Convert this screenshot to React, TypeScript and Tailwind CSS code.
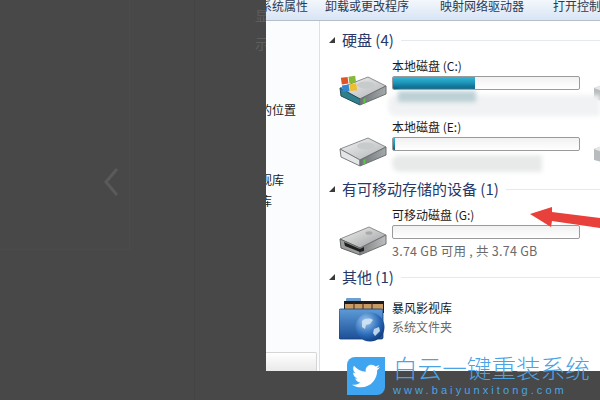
import type { FC, ReactNode } from 'react'
import { FaTwitter } from 'react-icons/fa'

const font = { fontFamily: '"Noto Sans CJK SC", "Liberation Sans", sans-serif' }

const Heading: FC<{ title: string }> = ({ title }) => (
  <div className="flex items-center h-5">
    <svg width="6" height="6" viewBox="0 0 6 6" className="mr-[7px] shrink-0">
      <path d="M6 0V6H0Z" fill="#3a3a3a" />
    </svg>
    <span className="text-[15px] text-[#27396b] leading-5 whitespace-nowrap">{title}</span>
    <div className="flex-1 h-px bg-[#e6eaf0] ml-[7px]" />
  </div>
)

// 硬盘图标,windows 标志可选
const DriveIcon: FC<{ windows?: boolean }> = ({ windows }) => (
  <svg width="48" height="30" viewBox="0 0 48 30" className="shrink-0">
    <defs>
      <linearGradient id="top" x1="0" y1="0" x2="1" y2="1">
        <stop offset="0" stopColor="#f2f3f3" />
        <stop offset="1" stopColor="#b0b3b5" />
      </linearGradient>
      <linearGradient id="right" x1="0" y1="0" x2="1" y2="0">
        <stop offset="0" stopColor="#6d7376" />
        <stop offset="1" stopColor="#a5a9ab" />
      </linearGradient>
    </defs>
    <path d="M1 12 29 1 47 10 21 23Z" fill="url(#top)" stroke="#8a8e90" strokeWidth="1" strokeLinejoin="round" />
    <path d="M1 12 21 23V29L2 20Z" fill={windows ? '#2f7f8c' : '#e4e5e6'} stroke={windows ? '#1f4f5a' : '#7a7d80'} strokeWidth="1" strokeLinejoin="round" />
    <path d="M21 23 47 10V18L21 29Z" fill="url(#right)" stroke="#6b6f72" strokeWidth="1" strokeLinejoin="round" />
    <ellipse cx="27" cy="9" rx="9" ry="3.5" fill="#c8cbcc" />
    <path d="M24.5 23V27.5L26.5 26.5V22Z" fill="#54c93f" />
  </svg>
)

const UsbIcon: FC = () => (
  <svg width="48" height="30" viewBox="0 0 48 30" className="shrink-0">
    <defs>
      <linearGradient id="usb" x1="0" y1="0" x2="1" y2="1">
        <stop offset="0" stopColor="#f3f3f3" />
        <stop offset="1" stopColor="#9a9c9d" />
      </linearGradient>
      <linearGradient id="usbside" x1="0" y1="0" x2="1" y2="0">
        <stop offset="0" stopColor="#7c7e80" />
        <stop offset="1" stopColor="#bcbebf" />
      </linearGradient>
    </defs>
    <path d="M1 13 30 1 47 9 21 22Z" fill="url(#usb)" stroke="#8d8f91" strokeWidth="1" strokeLinejoin="round" />
    <path d="M1 13 21 22V29L2 22Z" fill="#9b9d9f" stroke="#5f6163" strokeWidth="1" strokeLinejoin="round" />
    <path d="M21 22 47 9V18L21 29Z" fill="url(#usbside)" stroke="#6f7173" strokeWidth="1" strokeLinejoin="round" />
    <path d="M5 16 21 23 25 21V25L21 26 6 20Z" fill="#1f1f1f" />
    <ellipse cx="30" cy="7" rx="3.5" ry="1.8" fill="#a9a9a9" />
  </svg>
)

const WinLogo: FC = () => (
  <svg width="18" height="18" viewBox="0 0 20 20" className="absolute left-[11px] top-[18px]">
    <g transform="rotate(-8 10 10)">
      <rect x="2" y="2" width="7.5" height="7.5" fill="#e0542c" />
      <rect x="10.5" y="2" width="7.5" height="7.5" fill="#86b83a" />
      <rect x="2" y="10.5" width="7.5" height="7.5" fill="#2f86d2" />
      <rect x="10.5" y="10.5" width="7.5" height="7.5" fill="#f0bd2c" />
    </g>
  </svg>
)

const FolderIcon: FC = () => (
  <svg width="46" height="44" viewBox="0 0 46 44" className="shrink-0">
    <defs>
      <linearGradient id="folder" x1="0" y1="0" x2="0" y2="1">
        <stop offset="0" stopColor="#5d9bd8" />
        <stop offset="1" stopColor="#1d4f96" />
      </linearGradient>
      <radialGradient id="globe" cx="0.35" cy="0.3" r="0.8">
        <stop offset="0" stopColor="#9cc8ee" />
        <stop offset="0.6" stopColor="#2a6ab8" />
        <stop offset="1" stopColor="#0c3474" />
      </radialGradient>
    </defs>
    <rect x="7" y="0" width="15" height="6" rx="1" fill="#6f9fd0" />
    <rect x="5" y="3" width="40" height="12" fill="#1c1c1c" />
    <rect x="6" y="6" width="38" height="9" fill="#c99a62" />
    <path d="M15 4V15M24 4V15M33 4V15" stroke="#3a2a18" strokeWidth="1" />
    <rect x="0" y="11" width="44" height="30" rx="1.5" fill="url(#folder)" stroke="#153b75" strokeWidth="0.8" />
    <circle cx="31" cy="29" r="14.5" fill="url(#globe)" />
    <path d="M23 23c4-3 8-3 11-1l-3 4-4 1-1 4-3-2ZM35 31l5-2 1 4-5 5-2-3Z" fill="#d6e8f6" opacity="0.85" />
  </svg>
)

const PeekIcon: FC = () => (
  <svg width="20" height="16" viewBox="0 0 20 16" className="shrink-0 ml-[14px] mt-[28px]">
    <path d="M0 3 8 0 20 3V14L8 16 0 14Z" fill="#b9bcbe" />
    <path d="M0 3 8 0 20 3 8 6Z" fill="#e6e7e8" />
  </svg>
)

const Bar: FC<{ fill?: string }> = ({ fill }) => (
  <div className="w-[188px] h-[14px] rounded-[2px] border border-[#9a9a9a] bg-gradient-to-b from-[#f1f1f1] to-white overflow-hidden shrink-0">
    {fill && <div className={`h-full bg-gradient-to-b from-[#35b6d6] via-[#1b94b8] to-[#0b5f80] ${fill}`} />}
  </div>
)

const Drive: FC<{ name: string; fill?: string; sub?: string; peek?: boolean; icon: ReactNode; iconTop: string }> = ({
  name,
  fill,
  sub,
  peek,
  icon,
  iconTop,
}) => (
  <div className="flex h-[61px]">
    <div className={`relative w-[63px] pl-[10px] shrink-0 ${iconTop}`}>{icon}</div>
    <div className="shrink-0">
      <div className="h-[18px] text-[12px] leading-[18px] text-[#1a1a1a] whitespace-nowrap">{name}</div>
      <div className="mt-px">
        <Bar fill={fill} />
      </div>
      {sub && <div className="mt-px h-[21px] text-[12.5px] tracking-[0.25px] leading-[21px] text-[#6a6a6a] whitespace-nowrap">{sub}</div>}
    </div>
    {peek && <PeekIcon />}
  </div>
)

export default function App() {
  return (
    <div className="relative flex w-[600px] h-[400px] bg-[#484848] overflow-hidden" style={font}>
      {/* 左边暗色部分 */}
      <div className="flex w-[266px] shrink-0">
        <div className="w-[195px] border-r border-[#444444]">
          <div className="w-[130px] h-[250px] border-r border-b border-[#4b4b4b] pt-[167px] pl-[102px]">
            <svg width="18" height="30" viewBox="0 0 18 30">
              <path d="M15 2 4 15 15 28" fill="none" stroke="#5a5a5a" strokeWidth="3" />
            </svg>
          </div>
        </div>
        <div className="flex-1 flex flex-col items-end pt-px text-[14px] text-[#5e5e5e] overflow-hidden">
          <div className="h-7 leading-7 -mr-[3px]">显</div>
          <div className="h-7 leading-7 -mr-[3px]">示</div>
        </div>
      </div>

      <div className="flex flex-col w-[334px] shrink-0">
        <div className="flex flex-col h-[371px] bg-white overflow-hidden">
          {/* 工具栏 */}
          <div className="flex h-[21px] shrink-0 overflow-hidden border-b border-[#b4bfcc] bg-gradient-to-b from-[#f3f7fc] to-[#d8e5f4] text-[12px] leading-[12px] text-[#2a3a55] whitespace-nowrap">
            <span className="-ml-[6px]">系统属性</span>
            <span className="ml-[17px]">卸载或更改程序</span>
            <span className="ml-[31px]">映射网络驱动器</span>
            <span className="ml-[29px]">打开控制面板</span>
          </div>

          <div className="flex flex-1 min-h-0">
            {/* 侧边栏 */}
            <div className="flex flex-col w-[54px] shrink-0 bg-[#fbfcfe] border-r border-[#d6e3ef] text-[12px] text-[#1a1a1a] whitespace-nowrap overflow-hidden">
              <div className="-ml-[6px] mt-[80px] h-[18px] leading-[18px]">的位置</div>
              <div className="-ml-[6px] mt-[52px] h-[18px] leading-[18px]">视库</div>
              <div className="-ml-[6px] mt-[3px] h-[18px] leading-[18px]">库</div>
              <div className="mt-auto h-[19px] w-[51px] rounded-tr-[2px] border-t border-r border-[#d5d5d5] bg-gradient-to-b from-white to-[#e9e9e9]" />
            </div>

            {/* 内容 */}
            <div className="flex-1 min-w-0 pl-[9px] pt-[9px] overflow-hidden">
              <Heading title="硬盘 (4)" />
              <div className="mt-[7px]">
                <Drive
                  name="本地磁盘 (C:)"
                  fill="w-[44%]"
                  peek
                  icon={
                    <>
                      <DriveIcon windows />
                      <WinLogo />
                    </>
                  }
                  iconTop="pt-[19px]"
                />
                <Drive name="本地磁盘 (E:)" fill="w-[1%]" peek icon={<DriveIcon />} iconTop="pt-[19px]" />
              </div>
              <Heading title="有可移动存储的设备 (1)" />
              <div className="mt-[7px]">
                <Drive name="可移动磁盘 (G:)" sub="3.74 GB 可用 , 共 3.74 GB" icon={<UsbIcon />} iconTop="pt-[20px]" />
              </div>
              <Heading title="其他 (1)" />
              <div className="flex mt-[11px]">
                <div className="w-[63px] pl-[10px] shrink-0">
                  <FolderIcon />
                </div>
                <div className="pt-px text-[12px]">
                  <div className="h-[18px] leading-[18px] text-[#1a1a1a]">暴风影视库</div>
                  <div className="mt-px h-[18px] leading-[18px] text-[#6a6a6a]">系统文件夹</div>
                </div>
              </div>
            </div>
          </div>
        </div>
      </div>

      {/* 打码 */}
      <div className="absolute left-[388px] top-[95px] w-[212px] h-[21px] rounded-l-[8px] bg-[#f0f2f3] blur-[2px]" />
      <div className="absolute left-[398px] top-[91px] w-[78px] h-[11px] bg-[#bcd0d5] blur-[2px]" />
      <div className="absolute left-[392px] top-[155px] w-[150px] h-[17px] rounded-l-[8px] bg-[#e8eaea] blur-[2px]" />

      {/* 红色箭头 */}
      <svg width="72" height="26" viewBox="0 0 72 26" className="absolute left-[528px] top-[206px]">
        <path d="M2 8 24 1 24 6 72 12 72 22 24 15 23 21Z" fill="#e8403a" />
      </svg>

      {/* 水印 */}
      <div className="absolute left-[347px] top-[357px] flex">
        <div className="flex items-center justify-center w-[38px] h-[38px] rounded-tl-[8px] rounded-br-[8px] bg-[#3fa5f0]">
          <FaTwitter className="text-white text-[28px]" />
        </div>
        <div className="ml-2 -mt-[5px] text-[#4ba3e3]">
          <div className="text-[24.6px] leading-[30px] font-light whitespace-nowrap">白云一键重装系统</div>
          <div className="mt-[2px] text-[11px] leading-[12px] tracking-[3.1px] whitespace-nowrap" style={{ fontFamily: '"Liberation Sans", sans-serif' }}>
            www.baiyunxitong.com
          </div>
        </div>
      </div>
    </div>
  )
}
